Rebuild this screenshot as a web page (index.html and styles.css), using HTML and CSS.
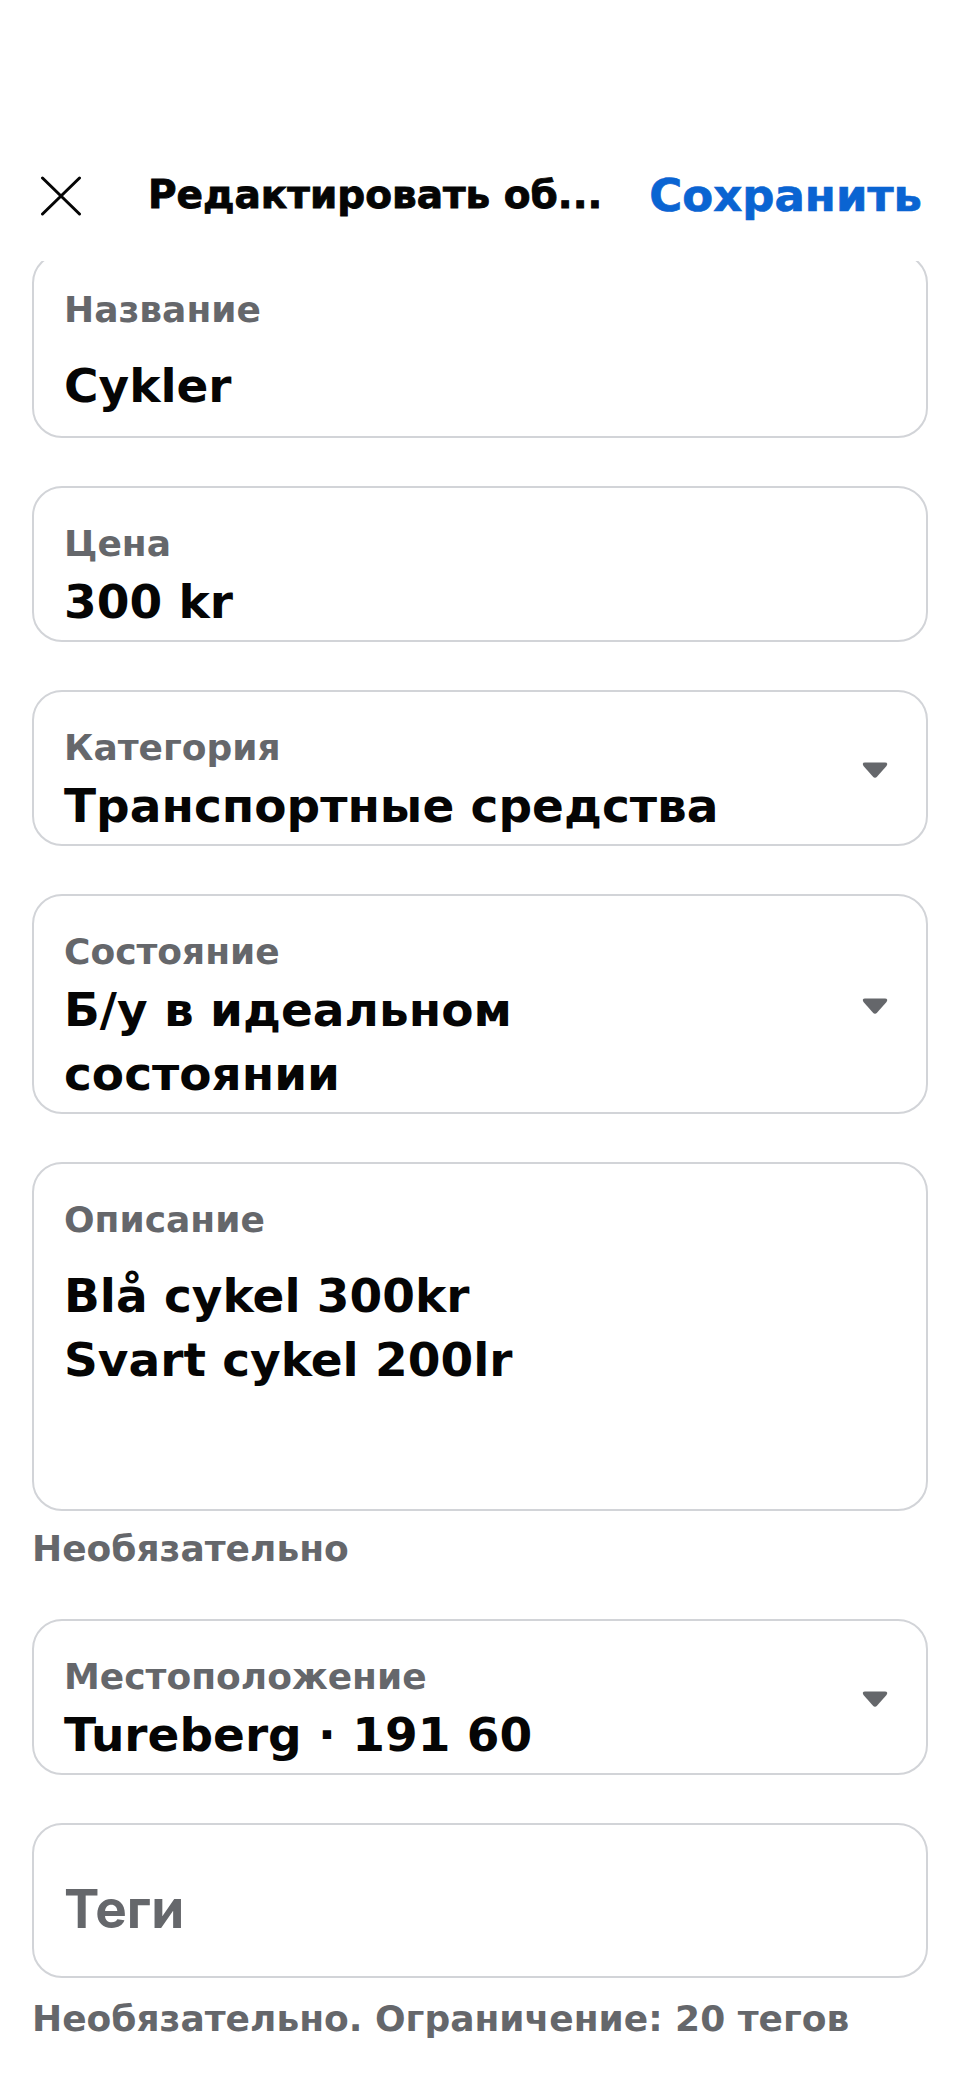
FILE: index.html
```html
<!DOCTYPE html>
<html lang="ru">
<head>
<meta charset="utf-8">
<title>Редактировать объявление</title>
<link rel="stylesheet" href="styles.css">
</head>
<body>
<div class="screen">
  <header class="topbar">
    <button class="close" aria-label="Закрыть">
      <svg width="42" height="40" viewBox="0 0 42 40"><path d="M2.5 2 L39.5 38 M39.5 2 L2.5 38" fill="none" stroke="#050505" stroke-width="3" stroke-linecap="round"/></svg>
    </button>
    <h1 class="title">Редактировать об...</h1>
    <button class="save">Сохранить</button>
  </header>

  <main class="content">
    <div class="form">
      <div class="field field--title">
        <div class="field-body">
          <div class="label">Название</div>
          <div class="value">Cykler</div>
        </div>
      </div>

      <div class="field">
        <div class="field-body">
          <div class="label">Цена</div>
          <div class="value">300 kr</div>
        </div>
      </div>

      <div class="field field--select">
        <div class="field-body">
          <div class="label">Категория</div>
          <div class="value">Транспортные средства</div>
        </div>
        <svg class="caret" width="28" height="18" viewBox="0 0 28 18"><path d="M4 1.5 H24 Q27.5 1.5 25.5 5 L16.2 15.6 Q14 18 11.8 15.6 L2.5 5 Q0.5 1.5 4 1.5 Z" fill="#65676b"/></svg>
      </div>

      <div class="field field--select">
        <div class="field-body">
          <div class="label">Состояние</div>
          <div class="value">Б/у в идеальном состоянии</div>
        </div>
        <svg class="caret" width="28" height="18" viewBox="0 0 28 18"><path d="M4 1.5 H24 Q27.5 1.5 25.5 5 L16.2 15.6 Q14 18 11.8 15.6 L2.5 5 Q0.5 1.5 4 1.5 Z" fill="#65676b"/></svg>
      </div>

      <div class="group">
        <div class="field field--desc">
          <div class="field-body">
            <div class="label">Описание</div>
            <div class="value value--multi">Blå cykel 300kr
Svart cykel 200lr</div>
          </div>
        </div>
        <div class="hint">Необязательно</div>
      </div>

      <div class="field field--select">
        <div class="field-body">
          <div class="label">Местоположение</div>
          <div class="value">Tureberg · 191 60</div>
        </div>
        <svg class="caret" width="28" height="18" viewBox="0 0 28 18"><path d="M4 1.5 H24 Q27.5 1.5 25.5 5 L16.2 15.6 Q14 18 11.8 15.6 L2.5 5 Q0.5 1.5 4 1.5 Z" fill="#65676b"/></svg>
      </div>

      <div class="group">
        <div class="field field--tags">
          <div class="field-body">
            <div class="placeholder">Теги</div>
          </div>
        </div>
        <div class="hint hint--wide">Необязательно. Ограничение: 20 тегов</div>
      </div>
    </div>
  </main>
</div>
</body>
</html>
```
FILE: styles.css
```css
* { box-sizing: border-box; }

html, body {
  margin: 0;
  padding: 0;
  background: #ffffff;
}

body {
  font-family: "DejaVu Sans", "Liberation Sans", sans-serif;
  color: #050505;
}

.screen {
  width: 960px;
  min-height: 2079px;
  background: #ffffff;
}

/* ---------- top bar ---------- */
.topbar {
  height: 261px;
  padding: 130px 38px 0 40px;
  display: flex;
  align-items: center;
  background: #ffffff;
  position: relative;
  z-index: 1;
}

.close {
  width: 42px;
  height: 40px;
  padding: 0;
  margin: 0 66px 0 0;
  border: 0;
  background: none;
  display: flex;
  flex: none;
}

.title {
  flex: 1;
  min-width: 0;
  margin: 0;
  font-family: "DejaVu Sans", sans-serif;
  font-weight: 700;
  font-size: 39px;
  line-height: 1.2;
  white-space: nowrap;
  overflow: hidden;
  color: #050505;
  -webkit-text-stroke: 0.9px #050505;
}

.save {
  flex: none;
  padding: 0;
  border: 0;
  background: none;
  font-family: "DejaVu Sans", sans-serif;
  font-weight: 700;
  font-size: 45px;
  line-height: 1.2;
  color: #0a64d2;
  -webkit-text-stroke: 0.7px #0a64d2;
}

/* ---------- form ---------- */
.content {
  overflow: hidden;
}

.form {
  margin-top: -8px;
  padding: 0 32px 40px;
  display: flex;
  flex-direction: column;
  gap: 48px;
}

.group {
  display: flex;
  flex-direction: column;
}

.field {
  border: 2px solid #d2d4d8;
  border-radius: 30px;
  padding: 34px 37px 6px 30px;
  display: flex;
  align-items: center;
  gap: 80px;
  background: #ffffff;
}

.field-body {
  flex: 1;
  min-width: 0;
}

.label {
  font-family: "DejaVu Sans", sans-serif;
  font-weight: 700;
  font-size: 36px;
  line-height: 44px;
  color: #65676b;
}

.value {
  margin-top: 4px;
  font-family: "DejaVu Sans", sans-serif;
  font-weight: 700;
  font-size: 47px;
  line-height: 64px;
  color: #050505;
}

.value--multi {
  white-space: pre-line;
}

.caret {
  flex: none;
  display: block;
  margin-bottom: 25px;
}

.field--title {
  padding-top: 33px;
  padding-bottom: 18px;
}

.field--title .value {
  margin-top: 22px;
}

.field--desc {
  height: 349px;
  align-items: flex-start;
}

.field--desc .value {
  margin-top: 22px;
}

.field--tags {
  padding-top: 52px;
  padding-bottom: 35px;
}

.placeholder {
  font-family: "Inter", "DejaVu Sans", sans-serif;
  font-weight: 700;
  font-size: 53px;
  line-height: 64px;
  color: #65676b;
}

.hint {
  margin-top: 16px;
  font-family: "DejaVu Sans", sans-serif;
  font-weight: 700;
  font-size: 36px;
  line-height: 44px;
  color: #65676b;
}

.hint--wide {
  margin-top: 19px;
}
```
